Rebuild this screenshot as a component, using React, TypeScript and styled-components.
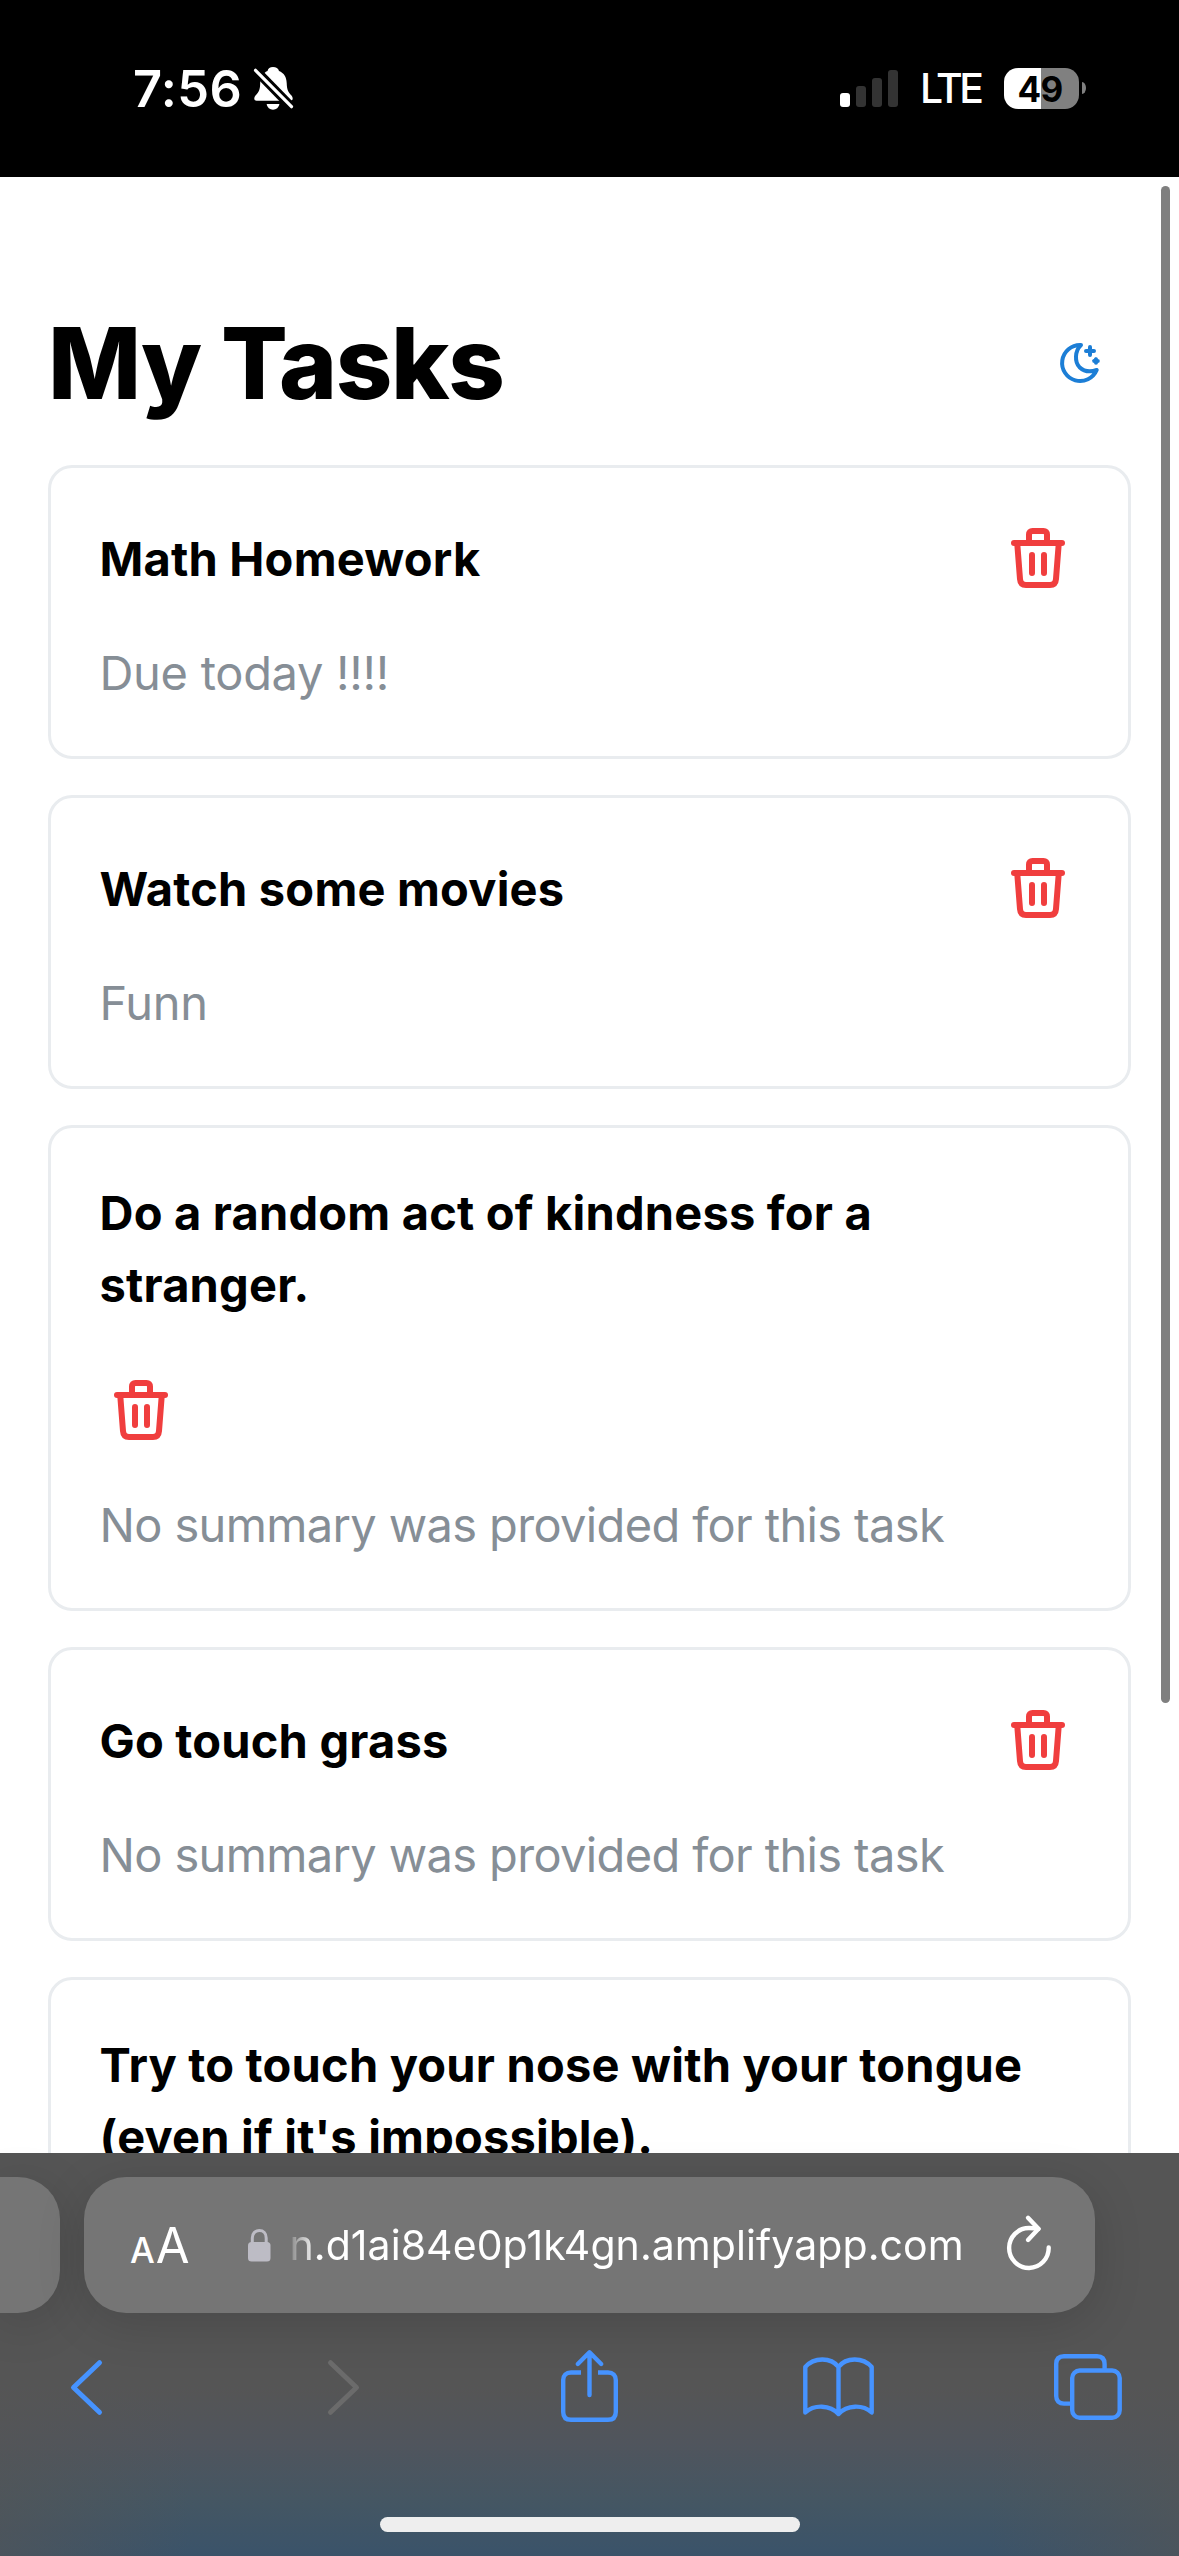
import React from "react";
import styled, { createGlobalStyle } from "styled-components";

const GlobalStyle = createGlobalStyle`
  * { box-sizing: border-box; }
  body { margin: 0; background: #fff; }
  svg { display: block; flex: none; overflow: visible; }
`;

const Screen = styled.div`
  display: flex;
  flex-direction: column;
  width: 1179px;
  height: 2556px;
  overflow: hidden;
  background: #fff;
  color: #000;
  font-family: Inter, "Liberation Sans", sans-serif;
`;

/* ---------- status bar ---------- */

const StatusBar = styled.header`
  display: flex;
  justify-content: space-between;
  flex: none;
  height: 177px;
  padding: 67px 93px 0 133px;
  background: #000;
  color: #fff;
`;

const StatusGroup = styled.div`
  display: flex;
  align-items: center;
  height: 42px;
`;

const Clock = styled.span`
  width: 121px;
  font-size: 50.5px;
  font-weight: 600;
  line-height: 43px;
  letter-spacing: 0.4px;
  white-space: nowrap;
`;

const Signal = styled.div`
  display: flex;
  align-items: flex-end;
  gap: 6px;
  height: 37px;
`;

const SignalBar = styled.i<{ $height: number; $on?: boolean }>`
  width: 10px;
  height: ${(p) => p.$height}px;
  border-radius: 3px;
  background: ${(p) => (p.$on ? "#fff" : "#333")};
`;

const Network = styled.span`
  width: 82px;
  margin-left: 22px;
  font-size: 41px;
  font-weight: 500;
  line-height: 44px;
  letter-spacing: -3.4px;
  white-space: nowrap;
`;

const Battery = styled.div`
  width: 75px;
  height: 41px;
  margin-left: 2px;
  padding-right: 3px;
  border-radius: 14px;
  background: linear-gradient(90deg, #fff 37px, #808080 37px);
  color: #000;
  font-size: 35px;
  font-weight: 700;
  line-height: 42px;
  letter-spacing: -0.8px;
  text-align: center;
`;

const BatteryTip = styled.i`
  width: 4px;
  height: 12px;
  margin-left: 3px;
  border-radius: 0 4px 4px 0 / 0 6px 6px 0;
  background: #808080;
`;

/* ---------- page ---------- */

const Page = styled.main`
  position: relative;
  flex: none;
  height: 1976px;
  padding: 120px 48px 0;
  overflow: hidden;
`;

const ScrollThumb = styled.i`
  position: absolute;
  top: 9px;
  right: 9px;
  width: 9px;
  height: 1517px;
  border-radius: 5px;
  background: #7f7f7f;
`;

const TitleRow = styled.div`
  display: flex;
  align-items: center;
  justify-content: space-between;
  height: 132px;
  margin-bottom: 36px;
`;

const Title = styled.h1`
  margin: 0;
  font-size: 98.8px;
  font-weight: 850;
  line-height: 132px;
  letter-spacing: -1.4px;
`;

const ThemeButton = styled.button`
  display: grid;
  place-items: center;
  width: 102px;
  height: 102px;
  padding: 0;
  border: 0;
  background: none;
  color: #1c7ed6;
`;

const TaskList = styled.div`
  display: flex;
  flex-direction: column;
  gap: 36px;
`;

const Card = styled.article`
  padding: 48px;
  border: 3px solid #e9ecef;
  border-radius: 24px;
  background: #fff;
`;

const CardHead = styled.div`
  display: flex;
  flex-wrap: wrap;
  align-items: center;
  justify-content: space-between;
  gap: 48px;
`;

const TaskName = styled.h2`
  margin: 1px 0 -1px 0.5px;
  font-size: 47px;
  font-weight: 650;
  line-height: 72px;
  letter-spacing: 0.2px;
`;

const DeleteButton = styled.button`
  display: grid;
  place-items: center;
  width: 84px;
  height: 84px;
  padding: 0;
  border: 0;
  background: none;
  color: #f03e3e;
`;

const Summary = styled.p<{ $tracking?: number }>`
  margin: 37px 0 -1px 0.5px;
  color: #868e96;
  font-size: 47px;
  line-height: 72px;
  letter-spacing: ${(p) => p.$tracking ?? -0.3}px;
  white-space: nowrap;
`;

/* ---------- browser chrome ---------- */

const BrowserBar = styled.footer`
  position: relative;
  display: flex;
  flex-direction: column;
  flex: none;
  height: 403px;
  padding-top: 24px;
  background: linear-gradient(
      90deg,
      rgba(85, 85, 85, 0.6),
      rgba(85, 85, 85, 0) 16%,
      rgba(85, 85, 85, 0) 84%,
      rgba(85, 85, 85, 0.6)
    ),
    linear-gradient(180deg, #555 58%, #50555d 72%, #445663 87%, #3a536a 100%);
`;

const AddressRow = styled.div`
  display: flex;
  gap: 24px;
  height: 136px;
`;

const Pill = styled.div`
  border-radius: 42px;
  background: #757575;
  box-shadow: 0 10px 50px rgba(0, 0, 0, 0.14);
`;

const PreviousTab = styled(Pill)`
  width: 60px;
  border-radius: 0 42px 42px 0;
`;

const AddressBar = styled(Pill)`
  display: flex;
  align-items: center;
  width: 1011px;
  padding: 0 44px 0 46px;
  color: #fff;
`;

const TextSize = styled.div`
  display: flex;
  align-items: baseline;
  gap: 2px;
  width: 118px;
  margin-top: 5px;
  line-height: 60px;
`;

const Letter = styled.span<{ $size: number; $weight: number }>`
  font-size: ${(p) => p.$size}px;
  font-weight: ${(p) => p.$weight};
  letter-spacing: -1px;
`;

const Url = styled.span`
  flex: 1;
  padding-left: 18.5px;
  font-size: 41px;
  line-height: 60px;
  letter-spacing: 0.07px;
  white-space: nowrap;
  mask-image: linear-gradient(90deg, transparent 14px, #000 46px);
`;

const Tools = styled.nav`
  display: flex;
  justify-content: space-between;
  align-items: center;
  height: 76px;
  margin-top: 36px;
  padding: 0 56px 0 51px;
  color: #4693ff;
`;

const Tool = styled.button<{ $nudge?: number }>`
  display: flex;
  justify-content: center;
  width: 71px;
  padding: 0 0 0 ${(p) => p.$nudge ?? 0}px;
  border: 0;
  background: none;
  color: inherit;
`;

const HomeIndicator = styled.i`
  width: 420px;
  height: 15px;
  margin: 92px auto 0;
  border-radius: 8px;
  background: #eee;
`;

/* ---------- icons ---------- */

const BellOff = () => (
  <svg width="39" height="43" viewBox="0 0 39 43">
    <path
      fill="#fff"
      d="M19 0C22 0 24.500 1.500 25 4C30 6 32.500 10 32.700 16C33 23 34 25 37.500 28.500C39.500 31 39 33.700 36 33.700H2.500C0 33.700-.5 31 1.500 28.500C5 25 6 23 6.200 16C6.400 10 9 6 13.500 4C14 1.500 16 0 19 0Z"
    />
    <path fill="#fff" d="M12.700 37H25.400C25 40.500 22 42.700 19 42.700S13 40.500 12.700 37Z" />
    <path stroke="#000" strokeWidth="9" d="M-1 .5L40 42.500" />
    <path stroke="#fff" strokeWidth="3.200" strokeLinecap="round" d="M1.500 3.300L37.500 39.700" />
  </svg>
);

const MoonStars = () => (
  <svg width="40" height="40" viewBox="0 0 40 40" fill="none" stroke="currentColor" strokeLinecap="round" strokeLinejoin="round">
    <path strokeWidth="4" d="M20.500 2H21C14.700 8 14.500 19 19.500 24.200C24.500 29 31 29 36.700 27A18 18 0 1 1 20.500 2Z" />
    <path strokeWidth="4" d="M30 4V12M26 8H34M36 16.200V19.800M34.200 18H37.800" />
    <path strokeWidth="1" fill="currentColor" d="M30 4.500L33.500 8L30 11.500L26.500 8ZM36 15L39 18L36 21L33 18Z" />
  </svg>
);

const Trash = () => (
  <svg width="54" height="60" viewBox="0 0 54 60" fill="none" stroke="currentColor" strokeWidth="6" strokeLinecap="round" strokeLinejoin="round">
    <path d="M3 15H51" />
    <path d="M18 15V6.500C18 4.300 19.300 3 21.500 3H32.500C34.700 3 36 4.300 36 6.500V15" />
    <path d="M6.200 15L9 51C9.300 55 11.500 57 15 57H39C42.500 57 44.700 55 45 51L47.800 15" />
    <path d="M21 27V45M33 27V45" />
  </svg>
);

const Lock = () => (
  <svg width="23" height="33" viewBox="0 0 23 33">
    <rect y="13" width="22.500" height="19.500" rx="3.500" fill="#bdbcc5" />
    <path fill="none" stroke="#bdbcc5" strokeWidth="3" d="M4.300 14V9C4.300 4.500 7 1.600 11.250 1.600S18.200 4.500 18.200 9V14" />
  </svg>
);

const Reload = () => (
  <svg width="44" height="58" viewBox="0 2 44 58" fill="none" stroke="currentColor" strokeWidth="4.400" strokeLinecap="round" strokeLinejoin="round">
    <path d="M41.700 33.500A19.800 20 0 1 1 22 14C26 14 29 14.300 31.500 15" />
    <path d="M21 3.800L31.500 14.800L21 26" />
  </svg>
);

const Chevron = ({ forward }: { forward?: boolean }) => (
  <svg width="31" height="55" viewBox="0 0 31 55" fill="none" stroke={forward ? "#6b6b6b" : "currentColor"} strokeWidth="5" strokeLinecap="round" strokeLinejoin="round">
    <path d={forward ? "M2.500 2.700L28.500 27.500L2.500 52.300" : "M28.500 2.700L2.500 27.500L28.500 52.300"} />
  </svg>
);

const Share = () => (
  <svg width="57" height="74" viewBox="0 0 57 74" fill="none" stroke="currentColor" strokeWidth="4.400" strokeLinejoin="round">
    <path d="M20 22.500H10C5 22.500 2.200 25.300 2.200 30V62C2.200 67 5 69.800 10 69.800H47C52 69.800 54.800 67 54.800 62V30C54.800 25.300 52 22.500 47 22.500H37" />
    <path strokeLinecap="round" d="M28.500 45V3M16.800 14L28.500 2.300L40.200 14" />
  </svg>
);

const Book = () => (
  <svg width="71" height="60" viewBox="0 0 71 60" fill="none" stroke="currentColor" strokeWidth="4.400" strokeLinecap="round" strokeLinejoin="round">
    <path d="M35.500 10C28 0 11 0 2.300 10V55.500C11 47.500 27 47.500 35.500 57C44 47.500 60 47.500 68.700 55.500V10C60 0 43 0 35.500 10V57" />
  </svg>
);

const Tabs = () => (
  <svg width="68" height="66" viewBox="0 0 68 66" fill="none" stroke="currentColor" strokeWidth="4.400">
    <path d="M16 49.600H10C5 49.600 2.200 46.800 2.200 42V10C2.200 5 5 2.200 10 2.200H43C48 2.200 50.600 5 50.600 10V16" />
    <rect x="18.200" y="16.500" width="47.500" height="47.200" rx="7.500" />
  </svg>
);

/* ---------- app ---------- */

interface Task {
  name: string;
  summary?: string;
}

const NO_SUMMARY = "No summary was provided for this task";

const tasks: Task[] = [
  { name: "Math Homework", summary: "Due today !!!!" },
  { name: "Watch some movies", summary: "Funn" },
  { name: "Do a random act of kindness for a stranger." },
  { name: "Go touch grass" },
  { name: "Try to touch your nose with your tongue (even if it's impossible)." },
];

const TaskCard = ({ task, cutOff }: { task: Task; cutOff: boolean }) => (
  <Card>
    <CardHead>
      <TaskName>{task.name}</TaskName>
      <DeleteButton aria-label="Delete task">
        <Trash />
      </DeleteButton>
    </CardHead>
    {!cutOff && (
      <Summary $tracking={task.summary ? undefined : -0.64}>{task.summary ?? NO_SUMMARY}</Summary>
    )}
  </Card>
);

export default function App() {
  return (
    <Screen>
      <GlobalStyle />
      <StatusBar>
        <StatusGroup>
          <Clock>7:56</Clock>
          <BellOff />
        </StatusGroup>
        <StatusGroup>
          <Signal>
            <SignalBar $height={14} $on />
            <SignalBar $height={21} />
            <SignalBar $height={29} />
            <SignalBar $height={37} />
          </Signal>
          <Network>LTE</Network>
          <Battery>49</Battery>
          <BatteryTip />
        </StatusGroup>
      </StatusBar>

      <Page>
        <TitleRow>
          <Title>My Tasks</Title>
          <ThemeButton aria-label="Toggle theme">
            <MoonStars />
          </ThemeButton>
        </TitleRow>
        <TaskList>
          {tasks.map((task, index) => (
            <TaskCard key={task.name} task={task} cutOff={index === tasks.length - 1} />
          ))}
        </TaskList>
        <ScrollThumb />
      </Page>

      <BrowserBar>
        <AddressRow>
          <PreviousTab />
          <AddressBar>
            <TextSize>
              <Letter $size={35} $weight={500}>A</Letter>
              <Letter $size={49} $weight={400}>A</Letter>
            </TextSize>
            <Lock />
            <Url>n.d1ai84e0p1k4gn.amplifyapp.com</Url>
            <Reload />
          </AddressBar>
        </AddressRow>
        <Tools>
          <Tool aria-label="Back">
            <Chevron />
          </Tool>
          <Tool aria-label="Forward" $nudge={13}>
            <Chevron forward />
          </Tool>
          <Tool aria-label="Share" $nudge={4}>
            <Share />
          </Tool>
          <Tool aria-label="Bookmarks" $nudge={2}>
            <Book />
          </Tool>
          <Tool aria-label="Tabs">
            <Tabs />
          </Tool>
        </Tools>
        <HomeIndicator />
      </BrowserBar>
    </Screen>
  );
}
